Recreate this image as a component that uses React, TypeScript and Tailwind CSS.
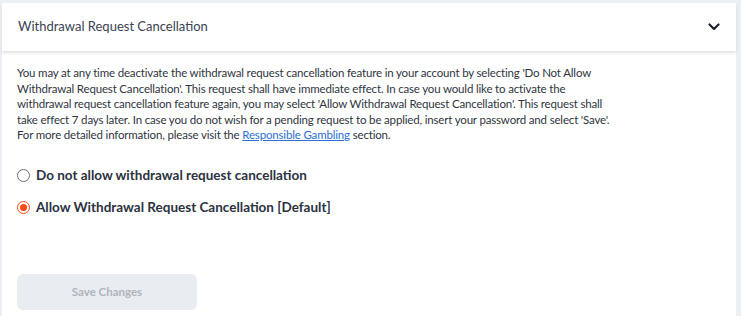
import React, { useState } from 'react'

function WithdrawalCancellation() {
    const [choice, setChoice] = useState('allow')
    const [open, setOpen] = useState(true)

    const options = [
        { id: 'deny', label: 'Do not allow withdrawal request cancellation' },
        { id: 'allow', label: 'Allow Withdrawal Request Cancellation [Default]' },
    ]

    return (
        <div className='min-h-screen bg-[#eceff3] pt-[3px] pl-[2px] pr-[5px] font-["Lato",sans-serif]'>
            <div className='bg-white min-h-[313px]'>
                <button
                    type='button'
                    onClick={() => setOpen(!open)}
                    className='w-full h-[48px] flex items-center justify-between pl-4 pr-[16px] bg-white shadow-[0_2px_3px_rgba(0,0,0,0.12)] text-[13px] text-[#3a4352]'
                >
                    <span>Withdrawal Request Cancellation</span>
                    <svg width='12' height='8' viewBox='0 0 12 8' fill='none'>
                        <path d='M1.5 1.5L6 6L10.5 1.5' stroke='#1f2530' strokeWidth='2.2' strokeLinecap='round' strokeLinejoin='round' />
                    </svg>
                </button>

                {open && (
                    <div className='px-[15px] pt-[14px]'>
                        <p className='text-[11.5px] tracking-[-0.17px] leading-[15.5px] text-[#2f3540] whitespace-nowrap'>
                            You may at any time deactivate the withdrawal request cancellation feature in your account by selecting 'Do Not Allow<br />
                            Withdrawal Request Cancellation'. This request shall have immediate effect. In case you would like to activate the<br />
                            withdrawal request cancellation feature again, you may select 'Allow Withdrawal Request Cancellation'. This request shall<br />
                            take effect 7 days later. In case you do not wish for a pending request to be applied, insert your password and select 'Save'.<br />
                            For more detailed information, please visit the{' '}
                            <a href='#' className='text-[#2a6fd6] underline'>Responsible Gambling</a> section.
                        </p>

                        <div className='mt-[24px] flex flex-col gap-[15px]'>
                            {options.map((o) => (
                                <label key={o.id} className='flex items-center gap-[6px] cursor-pointer'>
                                    <span
                                        onClick={() => setChoice(o.id)}
                                        className={
                                            choice === o.id
                                                ? 'w-[13px] h-[13px] rounded-full border-[1.5px] border-[#ff4a12] flex items-center justify-center'
                                                : 'w-[13px] h-[13px] rounded-full border border-[#6b6f75] flex items-center justify-center'
                                        }
                                    >
                                        {choice === o.id ? <span className='w-[7px] h-[7px] rounded-full bg-[#ff4a12]' /> : null}
                                    </span>
                                    <span className='text-[13.5px] leading-[17px] font-bold text-[#2b3240]'>{o.label}</span>
                                </label>
                            ))}
                        </div>

                        <button
                            type='button'
                            disabled
                            className='mt-[58px] w-[180px] h-[36px] rounded-[6px] bg-[#e9ecf0] text-[11.5px] font-bold text-[#aeb4bc]'
                        >
                            Save Changes
                        </button>
                    </div>
                )}
            </div>
        </div>
    )
}

export default function App() {
    return <WithdrawalCancellation />
}
